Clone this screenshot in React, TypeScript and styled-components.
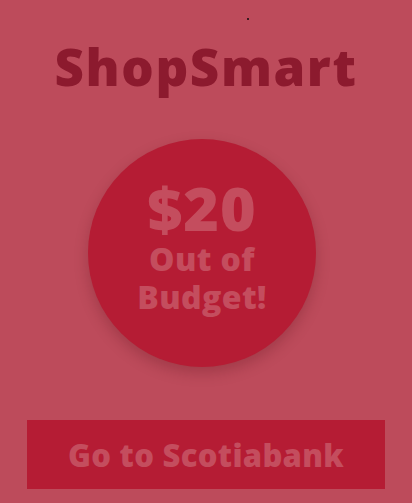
import React from "react";
import styled, { createGlobalStyle } from "styled-components";

const GlobalStyle = createGlobalStyle`
  html, body {
    margin: 0;
    padding: 0;
    background: #bd4b5b;
  }
  body {
    font-family: "Open Sans", "DejaVu Sans", sans-serif;
  }
`;

const Screen = styled.div`
  position: relative;
  width: 412px;
  height: 503px;
  overflow: hidden;
  display: flex;
  flex-direction: column;
  align-items: center;
  background: #bd4b5b;
`;

const Dot = styled.span`
  position: absolute;
  top: 18px;
  left: 247px;
  width: 2px;
  height: 2px;
  background: #3a1a20;
`;

const Title = styled.h1`
  margin: 36px 0 0;
  font-size: 51px;
  line-height: 60px;
  font-weight: 800;
  letter-spacing: 1.6px;
  color: #8c1a2e;
`;

const Budget = styled.div`
  box-sizing: border-box;
  margin: 43px 8px 0 0;
  padding-bottom: 14px;
  width: 228px;
  height: 228px;
  border-radius: 50%;
  background: #b51c34;
  box-shadow: 0 6px 14px rgba(80, 10, 20, 0.25);
  display: flex;
  flex-direction: column;
  align-items: center;
  justify-content: center;
  color: #c44d5e;
  font-weight: 800;
  text-align: center;
`;

const Amount = styled.div`
  font-size: 61px;
  line-height: 64px;
  letter-spacing: 1px;
`;

const Note = styled.div`
  font-size: 32px;
  line-height: 38px;
  letter-spacing: 0.4px;
`;

const BankButton = styled.button`
  margin-top: 53px;
  width: 358px;
  height: 69px;
  border: none;
  border-radius: 0;
  background: #b51c34;
  color: #c44d5e;
  font-family: inherit;
  font-size: 31px;
  font-weight: 800;
  letter-spacing: 0.3px;
  cursor: pointer;
`;

export default function App() {
  return (
    <>
      <GlobalStyle />
      <Screen>
        <Dot />
        <Title>ShopSmart</Title>
        <Budget>
          <Amount>$20</Amount>
          <Note>
            Out of
            <br />
            Budget!
          </Note>
        </Budget>
        <BankButton>Go to Scotiabank</BankButton>
      </Screen>
    </>
  );
}
